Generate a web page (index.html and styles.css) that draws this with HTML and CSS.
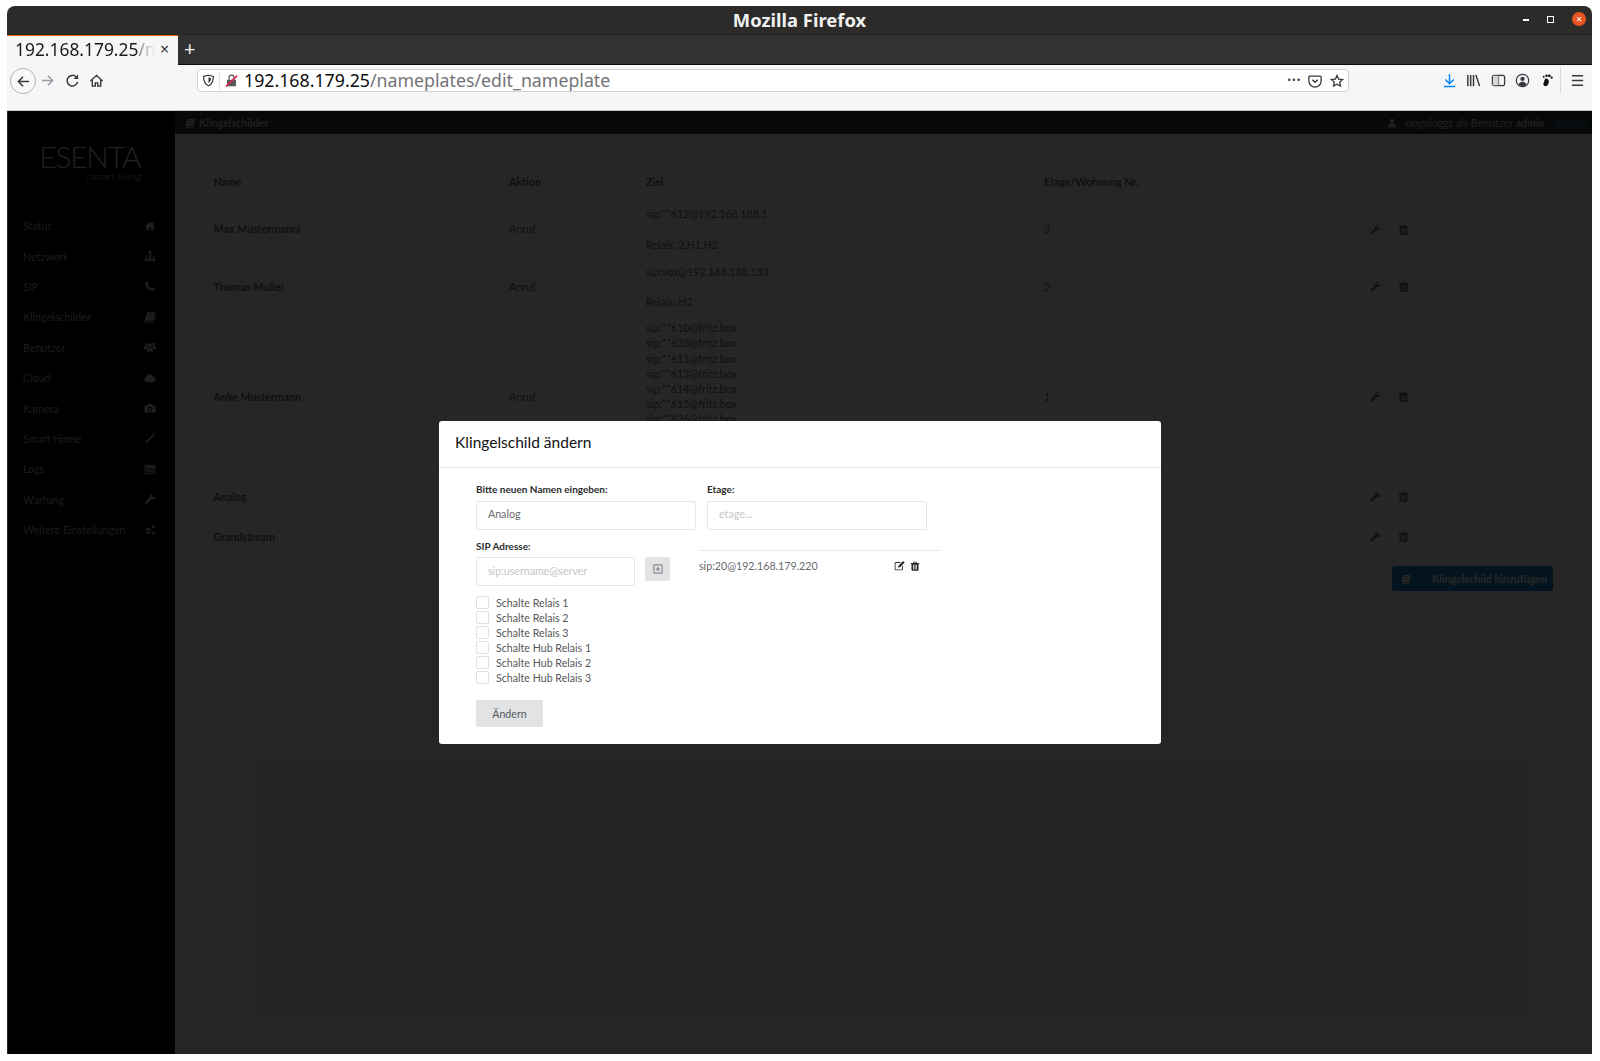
FILE: index.html
```html
<!DOCTYPE html>
<html lang="de">
<head>
    <meta charset="UTF-8">
    <title>Mozilla Firefox</title>
    <link rel="stylesheet" href="styles.css">
</head>
<body>
    <svg class="sprite" xmlns="http://www.w3.org/2000/svg">
        <symbol id="i-home" viewBox="0 0 16 16"><path d="M8 2.500 1 8.400l.8 1L3 8.400V14h3.800v-3.600h2.400V14H13V8.400l1.200 1 .8-1-2.200-1.900V3h-2v1.800z"/></symbol>
        <symbol id="i-sitemap" viewBox="0 0 16 16"><path d="M6 1h4v4H8.600v2.400h4.900V11H15v4h-4v-4h1.300V8.600H8.600V11H10v4H6v-4h1.400V8.600H3.700V11H5v4H1v-4h1.500V7.400h4.900V5H6z"/></symbol>
        <symbol id="i-phone" viewBox="0 0 16 16"><path d="M4 1.500 6.300 5 5 6.600c.7 1.800 2.500 3.600 4.400 4.400l1.600-1.300 3.500 2.300c-.3 1.600-1.600 2.600-3.300 2.500C6.300 14.200 1.800 9.700 1.500 4.800 1.400 3.100 2.400 1.800 4 1.500z"/></symbol>
        <symbol id="i-book" viewBox="0 0 16 16"><path d="M5 1.500h9.500c.6 0 .9.500.7 1.100l-2.500 9c-.3 1-.9 1.400-1.900 1.400H2.500c-.4.900 0 1.300.8 1.300H12c.6 0 .9-.3 1.100-.9l2-7.200.7.500-2.200 7.700c-.2.700-.9 1.100-1.600 1.100H3C1.500 15.500.6 14 1.100 12.500L3.700 2.700C3.900 2 4.300 1.500 5 1.500zM6.500 4l-.2.800h6l.2-.8zM5.800 6.300l-.2.800h6l.2-.8z" fill-rule="evenodd"/></symbol>
        <symbol id="i-users" viewBox="0 0 16 16"><circle cx="8" cy="6" r="2.600"/><circle cx="3.300" cy="4.300" r="1.900"/><circle cx="12.700" cy="4.300" r="1.900"/><path d="M4.200 14v-2.700C4.200 9.800 5 9 6 9h4c1 0 1.800.8 1.800 1.800V14zM0 10.500V8.500C0 7.300.8 6.700 1.800 6.700h2.400c-.1 1 .3 1.700.9 2.200-1.200.3-1.900 1.200-1.900 2.400H1zM16 10.500V8.500c0-1.200-.8-1.800-1.800-1.800h-2.400c.1 1-.3 1.700-.9 2.200 1.200.3 1.900 1.200 1.900 2.400H15z"/></symbol>
        <symbol id="i-cloud" viewBox="0 0 16 16"><path d="M4 13.500C2 13.500.5 12 .5 10.200c0-1.600 1-2.800 2.500-3.200C3.200 4.600 5.200 3 7.600 3c2 0 3.700 1.200 4.400 3 2 .1 3.500 1.700 3.500 3.700 0 2.100-1.600 3.800-3.700 3.800z"/></symbol>
        <symbol id="i-camera" viewBox="0 0 16 16"><path d="M5.500 2.500h5l1 2H14c.8 0 1.500.7 1.500 1.500v6.500c0 .8-.7 1.500-1.500 1.500H2c-.8 0-1.500-.7-1.500-1.500V6c0-.8.7-1.500 1.500-1.500h2.500zM8 6a3 3 0 1 0 0 6.200A3 3 0 0 0 8 6zm0 1.500a1.600 1.600 0 1 1 0 3.200 1.600 1.600 0 0 1 0-3.200z" fill-rule="evenodd"/></symbol>
        <symbol id="i-magic" viewBox="0 0 16 16"><path d="M11.200 4.200l1.600 1.600L3.200 15.400l-1.600-1.600zM13 .5l.6 1.600 1.600.6-1.600.6-.6 1.600-.6-1.600-1.600-.6 1.600-.6z"/></symbol>
        <symbol id="i-calendar" viewBox="0 0 16 16"><path d="M4 1h1.500v2H4zm6.500 0H12v2h-1.500zM1 2.500h2V4h3V2.500h4V4h3V2.500h2V15H1zm1 4V8h2.500V6.500zm3.500 0V8H7.500V6.500zm3 0V8h2V6.500zm3 0V8H14V6.500zM2 9v1.800h2.500V9zm3.500 0v1.800h2V9zm3 0v1.800h2V9zm3 0v1.800H14V9zM2 11.800V14h2.500v-2.200zm3.500 0V14h2v-2.200zm3 0V14h2v-2.200zm3 0V14H14v-2.200z" fill-rule="evenodd"/></symbol>
        <symbol id="i-wrench" viewBox="0 0 16 16"><path d="M15 4.200c.3 2.300-1.500 4.400-3.800 4.400-.5 0-.9-.1-1.300-.2L3.700 14.600c-.7.700-1.700.7-2.300 0-.7-.6-.7-1.600 0-2.300l6.200-6.200c-.1-.4-.2-.8-.2-1.300C7.400 2.500 9.500.7 11.800 1c.3 0 .4.300.2.500L10 3.500l.4 2.100 2.100.4 2-2c.2-.2.500-.1.500.2z"/></symbol>
        <symbol id="i-cogs" viewBox="0 0 16 16"><path d="M5.500 4.500l1 .2.600 1.300 1.300-.2.700 1.500-1 .9v1.200l1 .9-.7 1.500-1.300-.2-.6 1.300H4.700l-.6-1.300-1.300.2-.7-1.500 1-.9V8.200l-1-.9.700-1.500 1.300.2.600-1.300zm0 3.200a1.500 1.500 0 1 0 0 3 1.500 1.500 0 0 0 0-3zM12.500 1l.8.800 1.100-.2.500 1-.7.900.7.900-.5 1-1.100-.2-.8.800-.8-.8-1.100.2-.5-1 .7-.9-.7-.9.500-1 1.100.2zm0 1.800a.8.800 0 1 0 0 1.600.8.800 0 0 0 0-1.600zM12.500 10l.8.800 1.100-.2.500 1-.7.900.7.900-.5 1-1.100-.2-.8.800-.8-.8-1.100.2-.5-1 .7-.9-.7-.9.500-1 1.100.2zm0 1.800a.8.800 0 1 0 0 1.600.8.800 0 0 0 0-1.600z" fill-rule="evenodd"/></symbol>
        <symbol id="i-trash" viewBox="0 0 16 16"><path d="M5.500 1h5l.8 2H15v1.500h-1.300V14c0 .8-.6 1.500-1.300 1.500H3.600c-.7 0-1.300-.7-1.300-1.500V4.500H1V3h3.700zm.7 1.200L5.900 3h4.200l-.3-.8zM5 6v7.500h1.200V6zm2.400 0v7.500h1.200V6zm2.400 0v7.500H11V6z" fill-rule="evenodd"/></symbol>
        <symbol id="i-edit" viewBox="0 0 16 16"><path d="M3 3h7l-1.300 1.300H3c-.5 0-.8.3-.8.8v7.800c0 .5.300.8.800.8h8c.5 0 .8-.3.8-.8V8.700L13 7.500V13c0 1.100-.9 2-2 2H3c-1.100 0-2-.9-2-2V5c0-1.100.9-2 2-2zm10.200-1.500 2.200 2.200-6.700 6.700-2.800.6.600-2.800z"/></symbol>
        <symbol id="i-user" viewBox="0 0 16 16"><circle cx="8" cy="4.800" r="3.600"/><path d="M2 15v-3c0-2 1.500-3.400 3.200-3.400.8.600 1.800 1 2.800 1s2-.4 2.800-1C12.500 8.600 14 10 14 12v3z"/></symbol>
    </svg>

    <div class="window">
        <div class="titlebar">
            <span class="title">Mozilla Firefox</span>
            <div class="win-controls">
                <span class="win-min"></span>
                <span class="win-max"></span>
                <span class="win-close">✕</span>
            </div>
        </div>

        <div class="tabbar">
            <div class="tab">
                <span class="tab-label">192.168.179.25<span class="url-path">/n</span></span>
                <span class="tab-close">×</span>
            </div>
            <span class="tab-new">+</span>
        </div>

        <div class="toolbar">
            <span class="back-btn">
                <svg viewBox="0 0 16 16" class="tb-icon"><path d="M14 8H3M7.500 3 2.500 8l5 5" fill="none" stroke="#38383d" stroke-width="1.600"/></svg>
            </span>
            <svg viewBox="0 0 16 16" class="tb-icon tb-forward"><path d="M2 8h11M8.500 3l5 5-5 5" fill="none" stroke="#9a9ba0" stroke-width="1.600"/></svg>
            <svg viewBox="0 0 16 16" class="tb-icon tb-reload"><path d="M13.500 9.500A5.700 5.700 0 1 1 11.800 4" fill="none" stroke="#38383d" stroke-width="1.600"/><path d="M14 1.500v5h-5z" fill="#38383d"/></svg>
            <svg viewBox="0 0 16 16" class="tb-icon tb-home"><path d="M1.500 8.500 8 2.500l6.500 6M3.500 7.500V14h3.200v-3.500h2.600V14h3.200V7.500" fill="none" stroke="#38383d" stroke-width="1.500"/></svg>
            <div class="urlbar">
                <svg viewBox="0 0 16 16" class="ub-shield"><path d="M8 1.500 14 3c0 6-1.500 9.500-6 11.500C3.500 12.500 2 9 2 3z" fill="none" stroke="#38383d" stroke-width="1.500"/><path d="M8 4l3 .8c0 3-.8 5-3 6.200z" fill="#38383d"/></svg>
                <span class="ub-sep"></span>
                <svg viewBox="0 0 16 16" class="ub-lock"><path d="M2.500 7h11v8h-11z" fill="#55565a"/><path d="M5 7V4.500a3 3 0 0 1 6 0V7" fill="none" stroke="#55565a" stroke-width="1.500"/><path d="M1 15.500 15 2" stroke="#e22850" stroke-width="2"/></svg>
                <span class="url">192.168.179.25<span class="url-path">/nameplates/edit_nameplate</span></span>
                <span class="ub-dots">•••</span>
                <svg viewBox="0 0 16 16" class="ub-pocket"><path d="M2 2.500h12c.6 0 1 .4 1 1V8a7 7 0 0 1-14 0V3.500c0-.6.400-1 1-1z" fill="none" stroke="#38383d" stroke-width="1.500"/><path d="M5 6.500l3 3 3-3" fill="none" stroke="#38383d" stroke-width="1.600"/></svg>
                <svg viewBox="0 0 16 16" class="ub-star"><path d="M8 1.700l1.900 4.100 4.500.5-3.300 3 .9 4.500L8 11.600l-4 2.200.9-4.500-3.300-3 4.500-.5z" fill="none" stroke="#38383d" stroke-width="1.500"/></svg>
            </div>
            <div class="tb-right">
                <svg viewBox="0 0 16 16" class="tb-icon"><path d="M8 1v10M3.500 7 8 11.500 12.500 7M2 14.500h12" fill="none" stroke="#0a84ff" stroke-width="1.600"/></svg>
                <svg viewBox="0 0 16 16" class="tb-icon"><path d="M2 2v12M5 2v12M8 2v12M10.500 2l4 12" fill="none" stroke="#38383d" stroke-width="1.600"/></svg>
                <svg viewBox="0 0 16 16" class="tb-icon"><rect x="1.500" y="2.500" width="13" height="11" rx="2" fill="none" stroke="#38383d" stroke-width="1.400"/><path d="M8 2.500v11" stroke="#38383d" stroke-width="1.400"/><path d="M2 3h6v10H2z" fill="#d5d5d8"/></svg>
                <svg viewBox="0 0 16 16" class="tb-icon"><circle cx="8" cy="8" r="6.600" fill="none" stroke="#38383d" stroke-width="1.300"/><circle cx="8" cy="6.300" r="2.300" fill="#38383d"/><path d="M3.800 12.300c.6-2 2.300-3 4.200-3s3.600 1 4.200 3a6 6 0 0 1-8.400 0z" fill="#38383d"/></svg>
                <svg viewBox="0 0 16 16" class="tb-icon"><path d="M6.500 6c2.500-.5 4 1 4 3s-1.200 5-3.500 5-2.800-2-2-3.800c.6-1.400.5-2.200 1.500-4.200z" fill="#111"/><circle cx="8" cy="3" r="1.300" fill="#111"/><circle cx="11" cy="3" r="1.500" fill="#111"/><circle cx="13.500" cy="5" r="1.200" fill="#111"/><circle cx="5" cy="4" r="1" fill="#111"/></svg>
                <span class="tb-sep"></span>
                <svg viewBox="0 0 16 16" class="tb-icon"><path d="M2 3h12M2 8h12M2 13h12" stroke="#38383d" stroke-width="1.600"/></svg>
            </div>
        </div>

        <div class="viewport">
            <nav class="sidebar">
                <div class="logo">
                    <div class="logo-name">ESENTA</div>
                    <div class="logo-sub"><span class="logo-bar">|</span>smart living</div>
                </div>
                <a class="nav-item">Status<svg><use href="#i-home"/></svg></a>
                <a class="nav-item">Netzwerk<svg><use href="#i-sitemap"/></svg></a>
                <a class="nav-item">SIP<svg><use href="#i-phone"/></svg></a>
                <a class="nav-item">Klingelschilder<svg><use href="#i-book"/></svg></a>
                <a class="nav-item">Benutzer<svg><use href="#i-users"/></svg></a>
                <a class="nav-item">Cloud<svg><use href="#i-cloud"/></svg></a>
                <a class="nav-item">Kamera<svg><use href="#i-camera"/></svg></a>
                <a class="nav-item">Smart Home<svg><use href="#i-magic"/></svg></a>
                <a class="nav-item">Logs<svg><use href="#i-calendar"/></svg></a>
                <a class="nav-item">Wartung<svg><use href="#i-wrench"/></svg></a>
                <a class="nav-item">Weitere Einstellungen<svg><use href="#i-cogs"/></svg></a>
            </nav>

            <main class="main">
                <div class="topbar">
                    <svg class="topbar-book"><use href="#i-book"/></svg>
                    <span class="topbar-title">Klingelschilder</span>
                    <svg class="topbar-user"><use href="#i-user"/></svg>
                    <span class="topbar-login">eingeloggt als Benutzer <b>admin</b></span>
                    <a class="topbar-logout">Logout</a>
                </div>

                <div class="card">
                    <table class="nameplates">
                        <colgroup>
                            <col class="col-name"><col class="col-action"><col class="col-target"><col class="col-floor"><col>
                        </colgroup>
                        <thead>
                            <tr><th>Name</th><th>Aktion</th><th>Ziel</th><th>Etage/Wohnung Nr.</th><th></th></tr>
                        </thead>
                        <tbody>
                            <tr class="row-first">
                                <td class="cell-name">Max Mustermanni</td>
                                <td>Anruf</td>
                                <td>sip:**612@192.168.188.1<br><br>Relais: 2,H1,H2</td>
                                <td>3</td>
                                <td class="cell-actions"><span class="btn-group"><span><svg><use href="#i-wrench"/></svg></span><span><svg><use href="#i-trash"/></svg></span></span></td>
                            </tr>
                            <tr>
                                <td class="cell-name">Thomas Muller</td>
                                <td>Anruf</td>
                                <td>sip:vox@192.168.188.133<br><br>Relais: H2</td>
                                <td>2</td>
                                <td class="cell-actions"><span class="btn-group"><span><svg><use href="#i-wrench"/></svg></span><span><svg><use href="#i-trash"/></svg></span></span></td>
                            </tr>
                            <tr>
                                <td class="cell-name">Anke Mustermann</td>
                                <td>Anruf</td>
                                <td>sip:**610@fritz.box<br>sip:**628@fritz.box<br>sip:**611@fritz.box<br>sip:**613@fritz.box<br>sip:**614@fritz.box<br>sip:**615@fritz.box<br>sip:**626@fritz.box<br><br><br>&nbsp;</td>
                                <td>1</td>
                                <td class="cell-actions"><span class="btn-group"><span><svg><use href="#i-wrench"/></svg></span><span><svg><use href="#i-trash"/></svg></span></span></td>
                            </tr>
                            <tr class="row-analog">
                                <td class="cell-name">Analog</td>
                                <td></td>
                                <td></td>
                                <td></td>
                                <td class="cell-actions"><span class="btn-group"><span><svg><use href="#i-wrench"/></svg></span><span><svg><use href="#i-trash"/></svg></span></span></td>
                            </tr>
                            <tr class="row-grand">
                                <td class="cell-name">Grandstream</td>
                                <td></td>
                                <td></td>
                                <td></td>
                                <td class="cell-actions"><span class="btn-group"><span><svg><use href="#i-wrench"/></svg></span><span><svg><use href="#i-trash"/></svg></span></span></td>
                            </tr>
                        </tbody>
                    </table>
                    <div class="card-footer">
                        <a class="btn-add"><svg><use href="#i-book"/></svg><span>Klingelschild hinzufügen</span></a>
                    </div>
                </div>
            </main>

            <div class="backdrop"></div>

            <div class="modal">
                <div class="modal-header">Klingelschild ändern</div>
                <div class="modal-body">
                    <div class="form-row">
                        <div class="field">
                            <label>Bitte neuen Namen eingeben:</label>
                            <div class="input">Analog</div>
                        </div>
                        <div class="field">
                            <label>Etage:</label>
                            <div class="input placeholder">etage...</div>
                        </div>
                    </div>
                    <div class="form-row-2">
                        <div class="sip-col">
                            <label>SIP Adresse:</label>
                            <div class="sip-input">
                                <div class="input placeholder">sip:username@server</div>
                                <span class="btn-plus">
                                    <svg viewBox="0 0 16 16"><path d="M2.500 2.500h11v11h-11zM8 5v6M5 8h6" fill="none" stroke="#676a6c" stroke-width="1.100"/></svg>
                                </span>
                            </div>
                            <ul class="checks">
                                <li><span class="check"></span>Schalte Relais 1</li>
                                <li><span class="check"></span>Schalte Relais 2</li>
                                <li><span class="check"></span>Schalte Relais 3</li>
                                <li><span class="check"></span>Schalte Hub Relais 1</li>
                                <li><span class="check"></span>Schalte Hub Relais 2</li>
                                <li><span class="check"></span>Schalte Hub Relais 3</li>
                            </ul>
                            <a class="btn-change">Ändern</a>
                        </div>
                        <div class="sip-list">
                            <div class="sip-entry">
                                <span class="sip-text">sip:20@192.168.179.220</span>
                                <svg class="sip-edit"><use href="#i-edit"/></svg>
                                <svg class="sip-trash"><use href="#i-trash"/></svg>
                            </div>
                        </div>
                    </div>
                </div>
            </div>
        </div>
    </div>
</body>
</html>
```

FILE: styles.css
```css
* {
    box-sizing: border-box;
}
body {
    margin: 0;
    background: #ffffff;
    font-family: Lato, sans-serif;
    font-size: 10.65px;
    color: #676a6c;
}
.sprite {
    display: none;
}
svg {
    fill: currentColor;
}
.window {
    display: flex;
    flex-direction: column;
    width: 1585px;
    height: 1048px;
    margin: 6px 0 0 7px;
    border-radius: 8px 8px 0 0;
    overflow: hidden;
}

/* browser chrome */
.titlebar {
    position: relative;
    display: flex;
    justify-content: center;
    align-items: center;
    height: 28px;
    padding-bottom: 2px;
    background: #2c2b2a;
    color: #f0f0f0;
    font-family: "Noto Sans", sans-serif;
    font-weight: 700;
    font-size: 18.4px;
}
.win-controls {
    position: absolute;
    right: 6px;
    top: 6px;
    display: flex;
    align-items: center;
    gap: 18px;
}
.win-min {
    width: 6px;
    height: 1.5px;
    margin-top: 2px;
    background: #ffffff;
}
.win-max {
    width: 7px;
    height: 7px;
    border: 1.5px solid #ffffff;
}
.win-close {
    display: flex;
    align-items: center;
    justify-content: center;
    width: 14px;
    height: 14px;
    border-radius: 50%;
    background: #e95420;
    color: #ffffff;
    font-size: 8px;
    font-family: "DejaVu Sans", sans-serif;
}
.tabbar {
    display: flex;
    align-items: stretch;
    height: 31px;
    background: #333233;
    border-top: 1px solid #262625;
    border-bottom: 1px solid #0c0c0d;
}
.tab {
    display: flex;
    align-items: center;
    width: 171px;
    padding: 0 0 3px 8px;
    margin-bottom: -1px;
    background: #f5f6f7;
    border-top: 1px solid #e8651f;
    color: #1a1a1c;
    font-family: "Noto Sans", sans-serif;
    font-size: 17.4px;
}
.tab-label {
    width: 140px;
    overflow: hidden;
    white-space: nowrap;
    -webkit-mask-image: linear-gradient(to right, #000 122px, transparent 140px);
    mask-image: linear-gradient(to right, #000 122px, transparent 140px);
}
.url-path {
    color: #737376;
}
.tab-close {
    margin-left: 5px;
    color: #38383d;
    font-size: 16px;
}
.tab-new {
    margin-left: 6px;
    color: #f0f0f0;
    font-size: 20px;
    line-height: 28px;
    font-family: "Noto Sans", sans-serif;
}
.toolbar {
    display: flex;
    align-items: flex-start;
    height: 46px;
    padding: 3px 0 0 3px;
    background: #f5f6f7;
    border-bottom: 1px solid #c8c8ca;
}
.tb-icon {
    display: block;
    flex: none;
    width: 15px;
    height: 15px;
}
.back-btn {
    display: flex;
    align-items: center;
    justify-content: center;
    width: 26px;
    height: 26px;
    border: 1px solid #b5b5b7;
    border-radius: 50%;
    background: #f9f9fa;
}
.tb-forward {
    margin: 5px 0 0 4px;
}
.tb-reload {
    margin: 5px 0 0 10px;
}
.tb-home {
    margin: 5px 0 0 9px;
}
.urlbar {
    display: flex;
    align-items: center;
    width: 1152px;
    height: 23px;
    margin: 1px 0 0 93px;
    padding: 0 4px 0 0;
    background: #ffffff;
    border: 1px solid #d2d2d4;
    border-radius: 4px;
}
.ub-shield {
    width: 13px;
    height: 13px;
    margin-left: 4px;
}
.ub-sep {
    width: 1px;
    height: 18px;
    margin-left: 4px;
    background: #e4e4e6;
}
.ub-lock {
    width: 13px;
    height: 13px;
    margin-left: 5px;
}
.url {
    flex: 1;
    margin-left: 6px;
    color: #0c0c0d;
    font-family: "Noto Sans", sans-serif;
    font-size: 17.75px;
    line-height: 21px;
    white-space: nowrap;
}
.ub-dots {
    color: #38383d;
    font-size: 8px;
    font-family: "DejaVu Sans", sans-serif;
}
.ub-pocket {
    width: 14px;
    height: 14px;
    margin-left: 7px;
}
.ub-star {
    width: 14px;
    height: 14px;
    margin-left: 8px;
}
.tb-right {
    display: flex;
    align-items: center;
    gap: 9.3px;
    height: 24px;
    margin-left: 93px;
}
.tb-sep {
    width: 1px;
    height: 26px;
    margin: 0 -1px 0 -3px;
    background: #dcdcde;
}

/* page under the dialog */
.viewport {
    position: relative;
    display: flex;
    flex: 1;
    min-height: 0;
    background: #f3f3f4;
}
.sidebar {
    flex: none;
    width: 167px;
    margin-left: 1px;
    background: #020202;
}
.logo {
    height: 100px;
    padding: 33px 34px 0 0;
    text-align: right;
    color: #d8d8d8;
}
.logo-name {
    margin-right: 1px;
    font-weight: 300;
    font-size: 30px;
    line-height: 24px;
    letter-spacing: -1.3px;
}
.logo-sub {
    margin-top: 1px;
    font-weight: 300;
    font-size: 10.5px;
    line-height: 14px;
}
.logo-bar {
    margin-right: 1px;
    color: #e8a13a;
}
.nav-item {
    display: flex;
    justify-content: space-between;
    align-items: center;
    height: 30.4px;
    padding: 0 19px 0 15px;
    border-bottom: 1px solid #101010;
    color: #a7b1c2;
}
.nav-item svg {
    width: 12px;
    height: 12px;
    color: #c8c8c8;
}
.main {
    flex: 1;
    min-width: 0;
}
.topbar {
    display: flex;
    align-items: center;
    height: 23px;
    padding: 0 4px 0 10px;
    background: #3a3a3a;
    color: #d0d0d0;
}
.topbar-book {
    width: 10px;
    height: 10px;
    margin-right: 4px;
}
.topbar-title {
    flex: 1;
    font-weight: 700;
}
.topbar-user {
    width: 10px;
    height: 10px;
    margin-right: 7px;
}
.topbar-logout {
    margin-left: 11px;
    color: #1c84c6;
}
.card {
    width: 1355px;
    height: 434px;
    margin: 31px 0 0 31px;
    background: #ffffff;
    border-radius: 4px;
}
.nameplates {
    width: 100%;
    table-layout: fixed;
    border-collapse: collapse;
    line-height: 15.2px;
}
.col-name {
    width: 295px;
}
.col-action {
    width: 137px;
}
.col-target {
    width: 398px;
}
.col-floor {
    width: 318px;
}
.nameplates th {
    height: 35px;
    padding: 0 8px 1px;
    text-align: left;
    font-weight: 700;
    color: #676a6c;
    border-bottom: 1px solid #ebebeb;
}
.nameplates th:first-child {
    padding-left: 7.5px;
}
.nameplates td {
    padding: 5px 8px;
    vertical-align: middle;
    border-bottom: 1px solid #ebebeb;
}
.nameplates .cell-name {
    padding-left: 7.5px;
    font-weight: 700;
}
.row-first td {
    height: 58px;
}
.row-analog td {
    height: 38px;
}
.row-grand td {
    height: 42px;
}
.nameplates .cell-actions {
    padding-left: 5.5px;
    border-left: 1px solid #ebebeb;
}
.btn-group {
    display: inline-flex;
    height: 26px;
    border: 1px solid #e7eaec;
    border-radius: 3px;
    vertical-align: middle;
}
.btn-group span {
    display: flex;
    align-items: center;
    justify-content: center;
    width: 28px;
}
.btn-group span + span {
    border-left: 1px solid #e7eaec;
}
.btn-group svg {
    width: 11px;
    height: 11px;
    color: #676a6c;
}
.card-footer {
    display: flex;
    justify-content: flex-end;
    padding: 8px 8px 0 0;
}
.btn-add {
    display: flex;
    align-items: center;
    width: 161px;
    height: 25px;
    padding-left: 9px;
    background: #1c84c6;
    border-radius: 3px;
    color: #ffffff;
    font-weight: 700;
    white-space: nowrap;
}
.btn-add svg {
    flex: none;
    width: 10px;
    height: 10px;
}
.btn-add span {
    margin-left: 21px;
}
.backdrop {
    position: absolute;
    inset: 0;
    background: rgba(0, 0, 0, 0.85);
}

/* dialog */
.modal {
    position: absolute;
    left: 432px;
    top: 310px;
    width: 722px;
    height: 323px;
    background: #ffffff;
    border-radius: 3px;
}
.modal-header {
    height: 47px;
    padding-left: 16px;
    border-bottom: 1px solid #e7eaec;
    color: #101214;
    font-size: 15.5px;
    line-height: 43px;
}
.modal-body {
    padding: 14px 0 0 37px;
    color: #676a6c;
}
.form-row {
    display: flex;
    gap: 11px;
}
.field {
    width: 220px;
}
label {
    display: block;
    margin-bottom: 5px;
    color: #2a2c2e;
    font-weight: 700;
    font-size: 10px;
    line-height: 14px;
}
.input {
    height: 29px;
    padding: 0 11px;
    border: 1px solid #e5e6e7;
    border-radius: 2px;
    color: #676a6c;
    line-height: 24px;
}
.placeholder {
    color: #c5c6c7;
}
.form-row-2 {
    display: flex;
    margin-top: 9px;
}
.sip-col {
    width: 222px;
}
.sip-col label {
    margin-bottom: 4px;
}
.sip-input {
    display: flex;
    gap: 10px;
}
.sip-input .input {
    width: 159px;
    line-height: 26px;
}
.btn-plus {
    display: flex;
    align-items: center;
    justify-content: center;
    width: 25px;
    height: 24px;
    background: #e1e3e5;
    border-radius: 2px;
}
.btn-plus svg {
    width: 12px;
    height: 12px;
}
.checks {
    margin: 9px 0 0;
    padding: 0;
    list-style: none;
}
.checks li {
    display: flex;
    align-items: center;
    height: 14.95px;
    color: #55585a;
}
.check {
    width: 13px;
    height: 13px;
    margin-right: 7px;
    border: 1px solid #e0e0e0;
    border-radius: 2px;
}
.btn-change {
    display: flex;
    align-items: center;
    justify-content: center;
    width: 67px;
    height: 27px;
    margin-top: 15px;
    background: #e1e3e5;
    border-radius: 2px;
    color: #55585a;
}
.sip-list {
    width: 244px;
    padding-top: 11px;
}
.sip-entry {
    display: flex;
    align-items: center;
    height: 30px;
    border-top: 1px solid #e7eaec;
}
.sip-text {
    width: 196px;
    padding-left: 1px;
}
.sip-edit {
    width: 11px;
    height: 11px;
    color: #26282a;
}
.sip-trash {
    width: 10px;
    height: 10px;
    margin-left: 5px;
    color: #26282a;
}
```
